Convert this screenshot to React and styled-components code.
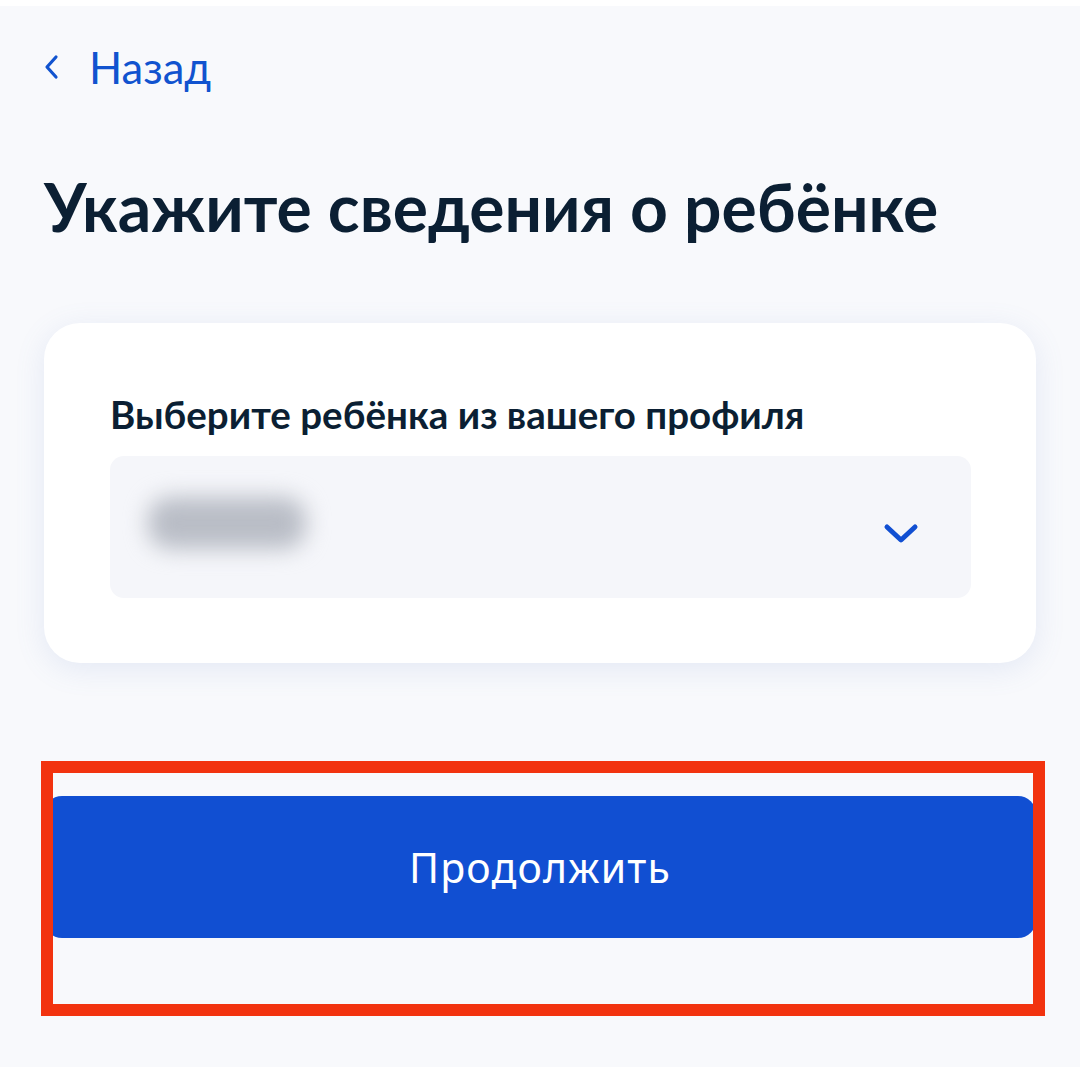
import React from "react";
import styled, { createGlobalStyle } from "styled-components";

const Global = createGlobalStyle`
  html, body { margin: 0; padding: 0; background: #f8f9fc; }
  body { font-family: Lato, "Noto Sans", sans-serif; }
  * { box-sizing: border-box; }
`;

const Page = styled.div`
  position: relative;
  width: 1080px;
  height: 1067px;
  background: #f8f9fc;
  border-top: 6px solid #ffffff;
  padding: 36px 44px 0 44px;
  display: flex;
  flex-direction: column;
`;

const Back = styled.a`
  display: flex;
  align-items: center;
  gap: 29px;
  color: #1153cf;
  font-family: Lato, sans-serif;
  font-size: 43.5px;
  line-height: 50px;
  text-decoration: none;
  height: 50px;
`;

const Title = styled.h1`
  margin: 75px 0 0 0;
  font-family: Lato, sans-serif;
  font-weight: 700;
  font-size: 66px;
  line-height: 80px;
  color: #0b1f33;
`;

const Card = styled.section`
  margin-top: 76px;
  background: #ffffff;
  border-radius: 36px;
  box-shadow: 0 6px 30px rgba(104, 132, 196, 0.14);
  padding: 68px 65px 65px 66px;
  display: flex;
  flex-direction: column;
`;

const Label = styled.div`
  font-family: Lato, sans-serif;
  font-weight: 700;
  font-size: 38.5px;
  line-height: 46px;
  color: #0b1f33;
  margin-bottom: 19px;
`;

const Select = styled.div`
  height: 142px;
  background: #f5f6fa;
  border-radius: 14px;
  display: flex;
  align-items: center;
  justify-content: space-between;
  padding: 0 52px 0 38px;
`;

const Blurred = styled.div`
  width: 158px;
  height: 52px;
  border-radius: 22px;
  background: #b9bdc6;
  filter: blur(11px);
  margin-top: -8px;
`;

const Chevron = styled.svg`
  width: 36px;
  height: 22px;
  margin-top: 14px;
`;

const ButtonArea = styled.div`
  position: relative;
  margin-top: 133px;
`;

const Button = styled.button`
  width: 100%;
  height: 142px;
  border: none;
  border-radius: 18px;
  background: #114fd2;
  color: #ffffff;
  font-family: "Noto Sans", Roboto, sans-serif;
  font-size: 41px;
  letter-spacing: 1.2px;
  font-weight: 400;
  display: flex;
  align-items: center;
  justify-content: center;
  cursor: pointer;
`;

const Highlight = styled.div`
  position: absolute;
  left: -3px;
  right: -9px;
  top: -35px;
  height: 255px;
  border: 12px solid #f2330f;
  pointer-events: none;
`;

export default function App() {
  return (
    <>
      <Global />
      <Page>
        <Back href="#">
          <svg width="16" height="26" viewBox="0 0 16 26">
            <path d="M12 3 L3 13 L12 23" fill="none" stroke="#1153cf" strokeWidth="3.2" strokeLinecap="round" strokeLinejoin="round" />
          </svg>
          <span>Назад</span>
        </Back>
        <Title>Укажите сведения о ребёнке</Title>
        <Card>
          <Label>Выберите ребёнка из вашего профиля</Label>
          <Select>
            <Blurred />
            <Chevron viewBox="0 0 36 22">
              <path d="M4 4 L18 17 L32 4" fill="none" stroke="#114fd2" strokeWidth="5" strokeLinecap="round" strokeLinejoin="round" />
            </Chevron>
          </Select>
        </Card>
        <ButtonArea>
          <Button>Продолжить</Button>
          <Highlight />
        </ButtonArea>
      </Page>
    </>
  );
}
